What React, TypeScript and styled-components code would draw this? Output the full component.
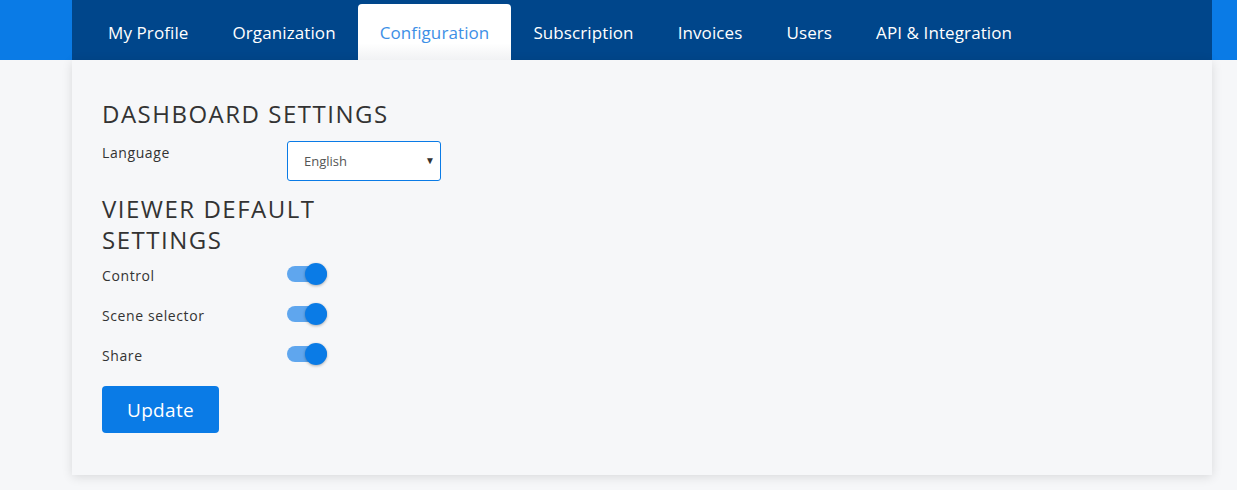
import styled, { createGlobalStyle } from "styled-components";

const GlobalStyle = createGlobalStyle`
  html, body {
    margin: 0;
    padding: 0;
    background: #f6f7f9;
    font-family: "Open Sans", "Liberation Sans", sans-serif;
    color: #333;
  }
`;

const Page = styled.div`
  min-height: 490px;
  background: linear-gradient(#0a7be6 0, #0a7be6 60px, #f6f7f9 60px);
`;

const Container = styled.div`
  width: 1140px;
  margin: 0 auto 0 72px;
`;

const Nav = styled.nav`
  display: flex;
  height: 60px;
  padding: 0 14px;
  background: #00468b;
  align-items: flex-end;
`;

const Tab = styled.a<{ $active?: boolean }>`
  display: flex;
  align-items: center;
  height: ${(p) => (p.$active ? "56px" : "60px")};
  padding: 0 22px;
  padding-top: ${(p) => (p.$active ? "0" : "4px")};
  box-sizing: border-box;
  font-size: 17px;
  letter-spacing: 0.1px;
  color: ${(p) => (p.$active ? "#3d8fe6" : "#fff")};
  background: ${(p) => (p.$active ? "linear-gradient(#fff 70%, #f1f2f4)" : "transparent")};
  border-radius: 4px 4px 0 0;
  text-decoration: none;
  cursor: pointer;
`;

const Card = styled.main`
  background: #f6f7f9;
  box-shadow: 0 2px 10px rgba(0, 0, 0, 0.12);
  padding: 38px 30px 42px;
`;

const Heading = styled.h2<{ $narrow?: boolean }>`
  margin: 0 0 ${(p) => (p.$narrow ? "0" : "12px")};
  font-size: 24px;
  font-weight: 400;
  letter-spacing: 1.5px;
  line-height: 31px;
  color: #333;
  max-width: ${(p) => (p.$narrow ? "250px" : "none")};
`;

const Row = styled.div`
  display: grid;
  grid-template-columns: 185px auto;
  align-items: start;
`;

const ToggleRow = styled.div`
  display: grid;
  grid-template-columns: 185px auto;
  align-items: center;
  height: 40px;
`;

const Label = styled.label<{ $top?: number }>`
  padding-top: ${(p) => p.$top ?? 0}px;
  font-size: 14px;
  letter-spacing: 0.6px;
  color: #333;
`;

const SelectBox = styled.div`
  position: relative;
  width: 154px;
  height: 40px;
  margin-bottom: 12px;
`;

const Select = styled.select`
  appearance: none;
  width: 100%;
  height: 100%;
  border: 1px solid #0a7be6;
  border-radius: 3px;
  background: #fff;
  padding: 0 16px;
  font-family: inherit;
  font-size: 13px;
  color: #555;
  outline: none;
`;

const Caret = styled.span`
  position: absolute;
  right: 6px;
  top: 12px;
  font-size: 10px;
  color: #333;
  pointer-events: none;
`;

const Track = styled.span`
  position: relative;
  display: inline-block;
  width: 40px;
  height: 16px;
  margin-top: -2px;
  border-radius: 8px;
  background: #5fa6ee;
`;

const Knob = styled.span`
  position: absolute;
  top: -3px;
  right: 0;
  width: 22px;
  height: 22px;
  border-radius: 50%;
  background: #0a7be6;
  box-shadow: 0 1px 3px rgba(0, 0, 0, 0.3);
`;

const Button = styled.button`
  margin-top: 11px;
  width: 117px;
  height: 47px;
  border: none;
  border-radius: 4px;
  background: #0a7be6;
  color: #fff;
  font-family: inherit;
  font-size: 19px;
  letter-spacing: 0.3px;
  cursor: pointer;
`;

const tabs = ["My Profile", "Organization", "Configuration", "Subscription", "Invoices", "Users", "API & Integration"];
const toggles = ["Control", "Scene selector", "Share"];

function Toggle() {
  return (
    <Track>
      <Knob />
    </Track>
  );
}

export default function App() {
  return (
    <Page>
      <GlobalStyle />
      <Container>
        <Nav>
          {tabs.map((t) => (
            <Tab key={t} $active={t === "Configuration"}>
              {t}
            </Tab>
          ))}
        </Nav>
        <Card>
          <Heading>DASHBOARD SETTINGS</Heading>
          <Row>
            <Label $top={2}>Language</Label>
            <SelectBox>
              <Select defaultValue="en">
                <option value="en">English</option>
              </Select>
              <Caret>▼</Caret>
            </SelectBox>
          </Row>
          <Heading $narrow>VIEWER DEFAULT SETTINGS</Heading>
          {toggles.map((t) => (
            <ToggleRow key={t}>
              <Label>{t}</Label>
              <Toggle />
            </ToggleRow>
          ))}
          <Button>Update</Button>
        </Card>
      </Container>
    </Page>
  );
}
